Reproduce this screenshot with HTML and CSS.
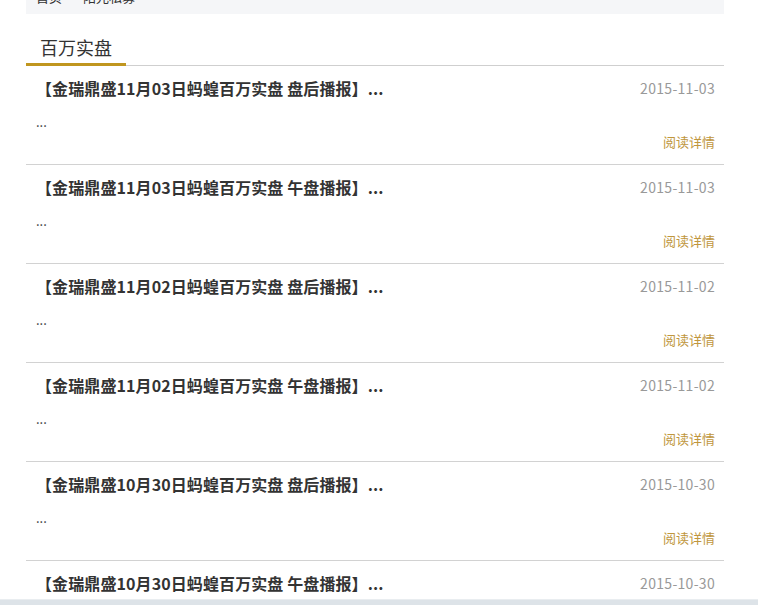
FILE: index.html
```html
<!DOCTYPE html>
<html lang="zh-CN">
<head>
    <meta charset="UTF-8">
    <meta name="viewport" content="width=device-width, initial-scale=1.0">
    <title>百万实盘</title>
    <link rel="stylesheet" href="styles.css">
</head>
<body>
    <div class="main">
        <div class="crumb">首页 <span class="sep">&gt;</span> 阳光私募</div>

        <div class="tabs">
            <div class="tab active">百万实盘</div>
        </div>

        <ul class="news-list">
            <li class="news-item">
                <div class="news-head">
                    <a class="news-title" href="#">【金瑞鼎盛11月03日蚂蝗百万实盘 盘后播报】...</a>
                    <span class="news-date">2015-11-03</span>
                </div>
                <p class="news-summary">...</p>
                <div class="news-more"><a href="#">阅读详情</a></div>
            </li>
            <li class="news-item">
                <div class="news-head">
                    <a class="news-title" href="#">【金瑞鼎盛11月03日蚂蝗百万实盘 午盘播报】...</a>
                    <span class="news-date">2015-11-03</span>
                </div>
                <p class="news-summary">...</p>
                <div class="news-more"><a href="#">阅读详情</a></div>
            </li>
            <li class="news-item">
                <div class="news-head">
                    <a class="news-title" href="#">【金瑞鼎盛11月02日蚂蝗百万实盘 盘后播报】...</a>
                    <span class="news-date">2015-11-02</span>
                </div>
                <p class="news-summary">...</p>
                <div class="news-more"><a href="#">阅读详情</a></div>
            </li>
            <li class="news-item">
                <div class="news-head">
                    <a class="news-title" href="#">【金瑞鼎盛11月02日蚂蝗百万实盘 午盘播报】...</a>
                    <span class="news-date">2015-11-02</span>
                </div>
                <p class="news-summary">...</p>
                <div class="news-more"><a href="#">阅读详情</a></div>
            </li>
            <li class="news-item">
                <div class="news-head">
                    <a class="news-title" href="#">【金瑞鼎盛10月30日蚂蝗百万实盘 盘后播报】...</a>
                    <span class="news-date">2015-10-30</span>
                </div>
                <p class="news-summary">...</p>
                <div class="news-more"><a href="#">阅读详情</a></div>
            </li>
            <li class="news-item">
                <div class="news-head">
                    <a class="news-title" href="#">【金瑞鼎盛10月30日蚂蝗百万实盘 午盘播报】...</a>
                    <span class="news-date">2015-10-30</span>
                </div>
                <p class="news-summary">...</p>
                <div class="news-more"><a href="#">阅读详情</a></div>
            </li>
        </ul>
    </div>

    <div class="bottom-bar"></div>
</body>
</html>
```

FILE: styles.css
```css
body {
    font-family: "Noto Sans CJK SC", "Noto Sans", sans-serif;
    margin: 0;
    padding: 0;
    background-color: #fff;
    color: #333;
    overflow: hidden;
}
a {
    text-decoration: none;
}
.main {
    width: 698px;
    margin-left: 26px;
}
.crumb {
    height: 34px;
    line-height: 34px;
    margin-top: -20px;
    padding-left: 10px;
    background-color: #f5f6f8;
    font-size: 13px;
    color: #333;
}
.crumb .sep {
    margin: 0 4px;
}
.tabs {
    display: flex;
    height: 51px;
    border-bottom: 1px solid #cfcfcf;
}
.tab {
    width: 100px;
    margin-top: 19px;
    margin-bottom: -1px;
    text-align: center;
    font-size: 18px;
    line-height: 29px;
    color: #333;
}
.tab.active {
    border-bottom: 3px solid #c0961f;
}
.news-list {
    list-style: none;
    margin: 0;
    padding: 0;
}
.news-item {
    padding: 11px 9px 13px 10px;
    border-bottom: 1px solid #d2d2d2;
}
.news-head {
    display: flex;
    justify-content: space-between;
    align-items: center;
    height: 22px;
}
.news-title {
    font-size: 16px;
    font-weight: bold;
    color: #333;
    line-height: 22px;
    letter-spacing: 0.1px;
}
.news-date {
    font-size: 14px;
    color: #999;
    letter-spacing: 0.3px;
}
.news-summary {
    margin: 12px 0 0;
    font-size: 13px;
    line-height: 22px;
    color: #333;
}
.news-more {
    text-align: right;
    font-size: 13px;
    line-height: 18px;
}
.news-more a {
    color: #c0963c;
}
.bottom-bar {
    position: fixed;
    left: 0;
    right: 0;
    bottom: 0;
    height: 5px;
    background-color: #dde3e8;
    border-top: 1px solid #e9edf0;
}
```
